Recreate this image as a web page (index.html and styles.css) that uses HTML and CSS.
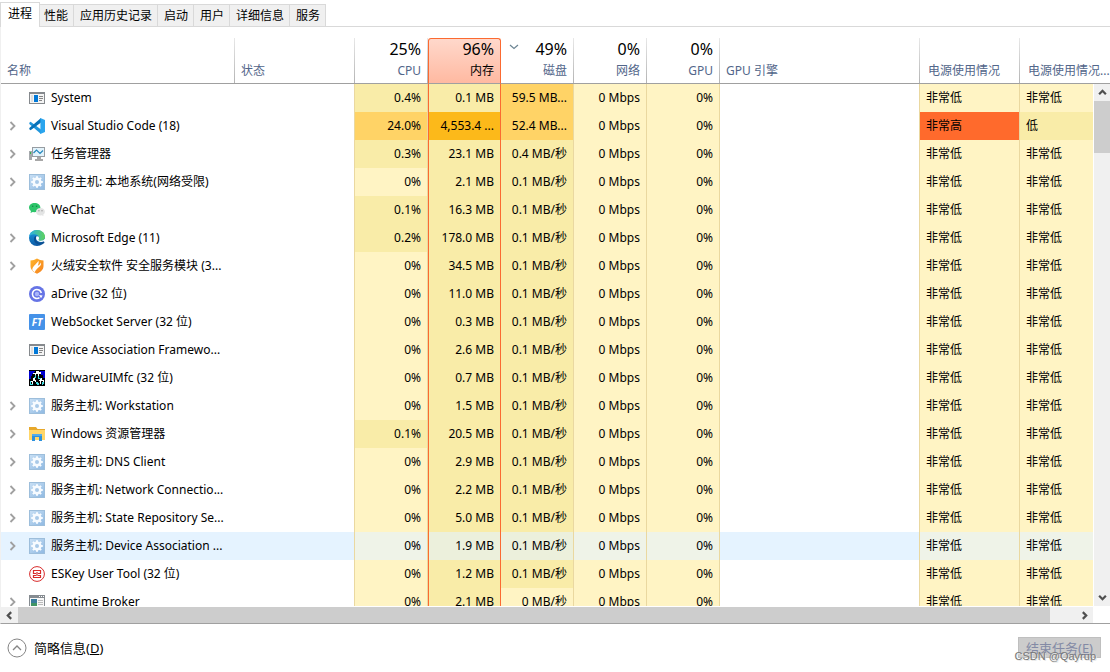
FILE: index.html
```html
<!DOCTYPE html>
<html lang="zh-CN">
<head>
<meta charset="utf-8">
<title>任务管理器</title>
<link rel="stylesheet" href="styles.css">
</head>
<body>
<svg class="sprite" aria-hidden="true">
  <defs>
    <linearGradient id="edge-blue" x1="0" y1="0" x2="0" y2="1"><stop offset="0" stop-color="#1b9de2"/><stop offset="1" stop-color="#0c59a4"/></linearGradient>
    <linearGradient id="edge-green" x1="0" y1="0" x2="1" y2="0"><stop offset="0" stop-color="#28afe8"/><stop offset="1" stop-color="#5fd35b"/></linearGradient>
    <linearGradient id="shield-fill" x1="0" y1="0" x2="1" y2="1"><stop offset="0" stop-color="#ffb52b"/><stop offset="1" stop-color="#f58220"/></linearGradient>
    <linearGradient id="tile-fill" x1="0" y1="0" x2="1" y2="1"><stop offset="0" stop-color="#c9e0f5"/><stop offset="1" stop-color="#8fb9e2"/></linearGradient>
  </defs>
  <symbol id="i-window" viewBox="0 0 16 16">
    <rect x=".5" y="2.500" width="15" height="11" fill="#f4f4f4" stroke="#85898d"/>
    <path d="M0 2h16v2H0z" fill="#85898d"/><path d="M2 5h2v7H2z" fill="#dedede"/>
    <path d="M5 5h4v7H5z" fill="#0078d7"/><path d="M10 6.500h4M10 8.500h4M10 10.500h3" stroke="#858585"/>
  </symbol>
  <symbol id="i-code" viewBox="0 0 16 16">
    <path d="M1.600 3.700L12 11.600V16L.3 6V4.700z" fill="#2196dc"/>
    <path d="M1.600 12.300L12 4.400V0L.3 10v1.300z" fill="#0872b9"/>
    <path d="M11.400 0L16 2v12l-4.600 2z" fill="#2aa5ee"/>
  </symbol>
  <symbol id="i-monitor" viewBox="0 0 16 16">
    <rect x="0" y="5" width="3" height="9" fill="#a5a9ac"/><path d="M1 6h1v2H1z" fill="#36b24a"/>
    <rect x="3.500" y="1.500" width="12" height="9" fill="#e3f3fb" stroke="#979da2"/>
    <path d="M4.500 7l3-3L11 7.500l3-3" fill="none" stroke="#2588bd" stroke-width="1.200"/><path d="M8 11h4v2h2v2H6v-2h2z" fill="#a7a7a7"/>
  </symbol>
  <symbol id="i-gear" viewBox="0 0 16 16">
    <rect x=".5" y=".5" width="15" height="15" fill="url(#tile-fill)" stroke="#9dbedb"/>
    <path d="M8 2.200v11.600M2.200 8h11.600M3.900 3.900l8.200 8.200M12.100 3.900l-8.200 8.200" stroke="#f7fbff" stroke-width="2"/>
    <circle cx="8" cy="8" r="4.500" fill="#f7fbff"/>
    <circle cx="8" cy="8" r="2" fill="#a9c9e8"/>
  </symbol>
  <symbol id="i-wechat" viewBox="0 0 16 16">
    <path d="M5.700 1C2.500 1 0 3 0 5.600c0 1.500.8 2.700 2 3.500L1.500 11l2.200-1.100 2 .3c3.200 0 5.700-2 5.700-4.600S8.900 1 5.700 1z" fill="#2dc56a"/>
    <circle cx="3.700" cy="4.300" r=".8" fill="#168348"/><circle cx="7.600" cy="4.300" r=".8" fill="#168348"/>
    <path d="M11.400 6C8.900 6 7 7.700 7 9.800s1.900 3.700 4.400 3.700l1.500-.2 1.700.9-.4-1.500c1-.7 1.700-1.700 1.700-2.900C15.900 7.700 14 6 11.400 6z" fill="#e3e4e4"/>
    <circle cx="9.900" cy="8.800" r=".7" fill="#999"/><circle cx="13" cy="8.800" r=".7" fill="#999"/>
  </symbol>
  <symbol id="i-edge" viewBox="0 0 16 16">
    <circle cx="8" cy="8" r="8" fill="url(#edge-blue)"/>
    <path d="M0 7C.5 3 3.700 0 8 0c4.600 0 8 3.200 8 6.700 0 2.300-1.700 4-4.100 4-1.700 0-2.600-.7-2.300-1.300.7-1 .7-2.100.1-3C8.900 5 7.100 4.200 5 4.200 2.600 4.200.7 5.500 0 7z" fill="url(#edge-green)"/>
    <path d="M7 6.500c-2 2-1.200 6 2.300 7 2.100.6 4.100 0 5.700-1.500" fill="none" stroke="#0c4f92" stroke-width="2"/>
    <path d="M7.700 6.300C6.500 7.500 6.900 9.800 8.700 11c2 1.300 4.800 1.100 6.300.2L16 12V8.500c-1 1.600-2.600 2.200-4.100 2.200-1.700 0-2.600-.7-2.300-1.300.6-1 .6-2.200-.2-3z" fill="#fff"/>
  </symbol>
  <symbol id="i-shield" viewBox="0 0 16 16">
    <path d="M1.500 2.500C4 2.500 6 1.500 8 .5c2 1 4 2 6.500 2V8c0 3.600-2.700 6-6.500 7.800C4.200 14 1.500 11.600 1.500 8z" fill="url(#shield-fill)"/>
    <path d="M3.500 12.500C2.500 9 6.800 7 9.500 2.800c.3 2 .1 3.300-.8 4.900 1.500-.6 2.600-1.700 3.300-3.200.9 4.300-4.800 5.200-6.200 9.800z" fill="#fff"/>
  </symbol>
  <symbol id="i-drive" viewBox="0 0 16 16">
    <circle cx="8" cy="8" r="8" fill="#6674e5"/>
    <path d="M12.300 7A4.500 4.500 0 1 0 10.500 11.700" fill="none" stroke="#fff" stroke-width="1.600"/>
    <path d="M10 9l3.600.5-1.600 2.700z" fill="#fff"/>
    <circle cx="8" cy="8" r="2.200" fill="#a9b5fa"/>
  </symbol>
  <symbol id="i-mfc" viewBox="0 0 16 16" shape-rendering="crispEdges">
    <path d="M0 0h16v16H0z" fill="#000"/>
    <path d="M0 1h6v1H5v2H3v2H2v3H0zM11 1h5v7h-2V5h-2V3h-1z" fill="#0000d0"/>
    <path d="M7 1h3v1h2v2h-2v2H9V4H7v2H6V4H4V3h3zM4 8h2v2h1v2H6v-1H4v3H3v-2H2v-1h2zM11 8h2v2h2v2h-1v-1h-2v3h-1v-3h-1v-1h1z" fill="#fff"/>
    <path d="M6 5h1v3H5V7h1zM9 6h1v2h2v1H9zM1 11h1v3h2v1H1zM7 12h2v1h1v2H8v-1H7zM13 12h2v2h-1v1h-1z" fill="#42d9dc"/>
  </symbol>
  <symbol id="i-folder" viewBox="0 0 16 16">
    <path d="M0 1h7l1.500 2H16v11H0z" fill="#e7a82b"/><path d="M0 4h16v10H0z" fill="#ffd668"/>
    <path d="M3 8h10v7h-3v-4H6v4H3z" fill="#2b91dd"/><path d="M3 8h10v2H3z" fill="#52aceb"/>
  </symbol>
  <symbol id="i-eskey" viewBox="0 0 16 16">
    <circle cx="8" cy="8" r="7.400" fill="#fff" stroke="#d82b2b"/>
    <path d="M4 4.500h8M4 11.500h8M4.500 4v3.500H7M11.500 4v3.500H9M4.500 12V9.500H7M11.500 12V9.500H9M8 6v4" fill="none" stroke="#d82b2b" stroke-width="1.200"/>
  </symbol>
  <symbol id="i-broker" viewBox="0 0 16 16">
    <rect x=".5" y="1.500" width="15" height="13" fill="#f7f7f7" stroke="#858b90"/><path d="M0 1h16v3H0z" fill="#858b90"/>
    <path d="M10 2h1v1h-1zM12 2h1v1h-1zM14 2h1v1h-1z" fill="#fff"/>
    <path d="M2 5h6v7H2z" fill="#397b9c"/><path d="M2 9h6v3H2z" fill="#419564"/><path d="M9 6.500h5M9 8.500h5M9 10.500h5" stroke="#bbb"/>
  </symbol>
  <symbol id="i-chevron" viewBox="0 0 8 10"><path d="M1.500 1L5.500 5l-4 4" fill="none" stroke="#a0a0a0" stroke-width="1.800"/></symbol>
  <symbol id="i-arrow" viewBox="0 0 8 8"><path d="M1 5.500l3-3 3 3" fill="none" stroke="#4f4f4f" stroke-width="2"/></symbol>
</svg>

<nav class="tabs" role="tablist">
  <button class="tab tab-active" role="tab" aria-selected="true">进程</button>
  <button class="tab" role="tab">性能</button>
  <button class="tab" role="tab">应用历史记录</button>
  <button class="tab" role="tab">启动</button>
  <button class="tab" role="tab">用户</button>
  <button class="tab" role="tab">详细信息</button>
  <button class="tab" role="tab">服务</button>
</nav>

<main class="panel">
  <div class="viewport">
    <table class="processes">
      <colgroup>
        <col class="w-name"><col class="w-status"><col class="w-num"><col class="w-num"><col class="w-num"><col class="w-num"><col class="w-num"><col><col class="w-power"><col class="w-trend">
      </colgroup>
      <thead>
        <tr>
          <th class="left">名称</th>
          <th class="left">状态</th>
          <th><strong>25%</strong>CPU</th>
          <th class="sorted"><strong>96%</strong>内存</th>
          <th><svg class="sort-mark" viewBox="0 0 10 6"><path d="M1 1l4 3.500L9 1" fill="none" stroke="#6c8593" stroke-width="1.200"/></svg><strong>49%</strong>磁盘</th>
          <th><strong>0%</strong>网络</th>
          <th><strong>0%</strong>GPU</th>
          <th class="left">GPU 引擎</th>
          <th class="left power-head">电源使用情况</th>
          <th class="left power-head no-line">电源使用情况...</th>
        </tr>
      </thead>
      <tbody id="rows"></tbody>
    </table>
    <div class="vscroll">
      <button class="scroll-btn" aria-label="向上滚动"><svg><use href="#i-arrow"/></svg></button>
      <div class="vthumb"></div>
      <button class="scroll-btn scroll-end" aria-label="向下滚动"><svg class="down"><use href="#i-arrow"/></svg></button>
    </div>
  </div>
  <div class="hscroll">
    <button class="scroll-btn" aria-label="向左滚动"><svg class="to-left"><use href="#i-arrow"/></svg></button>
    <div class="htrack"><div class="hthumb"></div></div>
    <button class="scroll-btn" aria-label="向右滚动"><svg class="to-right"><use href="#i-arrow"/></svg></button>
  </div>
</main>

<footer class="footer">
  <button class="details">
    <svg viewBox="0 0 20 20"><circle cx="10" cy="10" r="9" fill="#fff" stroke="#858585"/><path d="M6 12l4-4 4 4" fill="none" stroke="#858585" stroke-width="1.300"/></svg>
    <span>简略信息(<u>D</u>)</span>
  </button>
  <div class="end-area">
    <button class="end-task" disabled>结束任务(<u>E</u>)</button>
    <span class="watermark">CSDN @Qayrup</span>
  </div>
</footer>
<script src="rows.js"></script>
</body>
</html>
```
FILE: rows.js
```js
// icon, expandable, name, cpu, memory, disk
const processes = [
  ["window", 0, "System", "0.4%", "0.1 MB", "59.5 MB..."],
  ["code", 1, "Visual Studio Code (18)", "24.0%", "4,553.4 ...", "52.4 MB..."],
  ["monitor", 1, "任务管理器", "0.3%", "23.1 MB", "0.4 MB/秒"],
  ["gear", 1, "服务主机: 本地系统(网络受限)", "0%", "2.1 MB", "0.1 MB/秒"],
  ["wechat", 0, "WeChat", "0.1%", "16.3 MB", "0.1 MB/秒"],
  ["edge", 1, "Microsoft Edge (11)", "0.2%", "178.0 MB", "0.1 MB/秒"],
  ["shield", 1, "火绒安全软件 安全服务模块 (3...", "0%", "34.5 MB", "0.1 MB/秒"],
  ["drive", 0, "aDrive (32 位)", "0%", "11.0 MB", "0.1 MB/秒"],
  ["ft", 0, "WebSocket Server (32 位)", "0%", "0.3 MB", "0.1 MB/秒"],
  ["window", 0, "Device Association Framewo...", "0%", "2.6 MB", "0.1 MB/秒"],
  ["mfc", 0, "MidwareUIMfc (32 位)", "0%", "0.7 MB", "0.1 MB/秒"],
  ["gear", 1, "服务主机: Workstation", "0%", "1.5 MB", "0.1 MB/秒"],
  ["folder", 1, "Windows 资源管理器", "0.1%", "20.5 MB", "0.1 MB/秒"],
  ["gear", 1, "服务主机: DNS Client", "0%", "2.9 MB", "0.1 MB/秒"],
  ["gear", 1, "服务主机: Network Connectio...", "0%", "2.2 MB", "0.1 MB/秒"],
  ["gear", 1, "服务主机: State Repository Se...", "0%", "5.0 MB", "0.1 MB/秒"],
  ["gear", 1, "服务主机: Device Association ...", "0%", "1.9 MB", "0.1 MB/秒"],
  ["eskey", 0, "ESKey User Tool (32 位)", "0%", "1.2 MB", "0.1 MB/秒"],
  ["broker", 1, "Runtime Broker", "0%", "2.1 MB", "0 MB/秒"]
];
const hovered = 16;

function heat(value) {
  const n = parseFloat(value);
  return n >= 10 ? "heat-3" : n > 0 ? "heat-2" : "heat-1";
}

document.getElementById("rows").innerHTML = processes.map(([icon, open, name, cpu, mem, disk], i) => {
  const busy = icon === "code";
  const toggle = open
    ? `<button class="toggle" aria-label="展开"><svg><use href="#i-chevron"/></svg></button>`
    : `<span class="toggle"></span>`;
  const picture = icon === "ft"
    ? `<span class="icon icon-ft">FT</span>`
    : `<svg class="icon"><use href="#i-${icon}"/></svg>`;
  return `<tr class="${i === hovered ? "hovered" : ""}">
    <td><div class="name">${toggle}${picture}<span>${name}</span></div></td>
    <td></td>
    <td class="num ${heat(cpu)}">${cpu}</td>
    <td class="num memory ${busy ? "heat-4" : "heat-2"}">${mem}</td>
    <td class="num ${heat(disk)}">${disk}</td>
    <td class="num heat-1">0 Mbps</td>
    <td class="num heat-1">0%</td>
    <td class="engine"></td>
    <td class="power ${busy ? "heat-5" : "heat-1"}">${busy ? "非常高" : "非常低"}</td>
    <td class="power ${busy ? "heat-2" : "heat-1"}">${busy ? "低" : "非常低"}</td>
  </tr>`;
}).join("");
```
FILE: styles.css
```css
* { box-sizing: border-box; }
body {
  margin: 0;
  height: 100vh;
  display: flex;
  flex-direction: column;
  background: #fff;
  color: #000;
  font: 12px/16px "Noto Sans", "Noto Sans CJK SC", sans-serif;
  overflow: hidden;
}
button { font: inherit; color: inherit; border: 0; padding: 0; margin: 0; background: none; }
.sprite { position: absolute; width: 0; height: 0; }

.tabs { display: flex; align-items: flex-end; height: 27px; flex: none; border-bottom: 1px solid #d9d9d9; }
.tab { height: 22px; padding: 0 5px 0 6px; background: #f0f0f0; border-top: 1px solid #d9d9d9; border-right: 1px solid #d9d9d9; }
.tab:nth-child(2) { padding: 0 5px 0 4px; }
.tab-active { height: 25px; padding: 0 7px 3px; margin-bottom: -1px; background: #fff; border-left: 1px solid #d9d9d9; }

.panel { flex: 1; min-height: 0; display: flex; flex-direction: column; border-left: 1px solid #f0f0f0; border-bottom: 1px solid #a0a0a0; }
.viewport { position: relative; flex: 1; min-height: 0; overflow: hidden; padding-top: 11px; }
.processes { width: 100%; table-layout: fixed; border-collapse: separate; border-spacing: 0; }
.w-name { width: 234px; }
.w-status { width: 120px; }
.w-num { width: 73px; }
.w-power { width: 100px; }
.w-trend { width: 90px; }

th {
  position: relative;
  height: 46px;
  padding: 0 7px 4px 6px;
  border-bottom: 1px solid #a0a0a0;
  background: linear-gradient(#e8e8e8, #b4b4b4) right / 1px 100% no-repeat;
  color: #52668a;
  font-weight: 400;
  text-align: right;
  vertical-align: bottom;
  white-space: nowrap;
}
th strong { display: block; margin-bottom: 4px; color: #000; font-size: 16px; line-height: 20px; font-weight: 400; }
th.left { text-align: left; }
th.power-head { padding: 0 0 4px 8px; }
th.sorted { padding-right: 6px; color: #000; background: linear-gradient(#ffd8cb, #ffb9a1); border: 1px solid #fb6a31; border-bottom-color: #a0a0a0; border-radius: 3px 3px 0 0; }
th.no-line { background: none; }
.sort-mark { position: absolute; top: 6px; left: 8px; width: 10px; height: 6px; }

td { height: 28px; padding: 0; border-right: 1px solid transparent; white-space: nowrap; }
td:nth-child(2), td.num, td.engine, td.power { border-right-color: #ead8a0; }
td.num { padding-right: 6px; text-align: right; }
td.memory { border-left: 1px solid #fb6a31; border-right-color: #fb6a31; }
td.power { padding-left: 6px; }
.heat-1 { background: #fff4c4; }
.heat-2 { background: #f9eca8; }
.heat-3 { background: #ffd366; }
.heat-4 { background: #fcb91a; }
.heat-5 { background: #ff6a2c; }
.hovered td { background: #e5f3ff; }
.hovered .heat-1 { background: #eff3e8; }
.hovered .heat-2 { background: #ecf0dc; }
.name { display: flex; align-items: center; }
.toggle { width: 8px; height: 10px; margin: 0 12px 0 8px; flex: none; }
.toggle svg { display: block; width: 8px; height: 10px; }
.icon { width: 16px; height: 16px; margin-right: 6px; flex: none; }
.icon-ft { border-radius: 1px; background: #4592e8; color: #fff; font-size: 10px; font-weight: 700; font-style: italic; text-align: center; }

.vscroll { position: absolute; top: 57px; right: 0; bottom: 0; width: 17px; display: flex; flex-direction: column; background: #f0f0f0; border-left: 1px solid #fff; }
.scroll-btn { width: 17px; height: 17px; flex: none; display: flex; align-items: center; justify-content: center; }
.vscroll .scroll-btn { width: 16px; }
.scroll-btn svg { width: 9px; height: 9px; }
.scroll-end { margin: auto 0 0; }
.down { transform: rotate(180deg); }
.to-left { transform: rotate(-90deg); }
.to-right { transform: rotate(90deg); }
.vthumb { height: 52px; background: #cdcdcd; }
.hscroll { display: flex; flex: none; height: 17px; margin-right: 17px; border-top: 1px solid #fff; background: #f0f0f0; }
.htrack { flex: 1; }
.hthumb { width: 97.5%; height: 100%; background: #cdcdcd; }

.footer { display: flex; flex: none; align-items: center; justify-content: space-between; height: 48px; padding: 0 9px 1px 7px; font-size: 13px; }
.details { display: flex; align-items: center; gap: 7px; }
.details svg { width: 20px; height: 20px; }
.end-area { position: relative; }
.end-task { display: block; width: 83px; height: 21px; border: 1px solid #bfbfbf; background: #ccc; color: #838aa5; }
.watermark { position: absolute; right: 5px; bottom: -5px; color: #777; font: 11px/14px "Liberation Sans", sans-serif; text-shadow: 1px 1px 0 #e8e8e8; white-space: nowrap; }
```
